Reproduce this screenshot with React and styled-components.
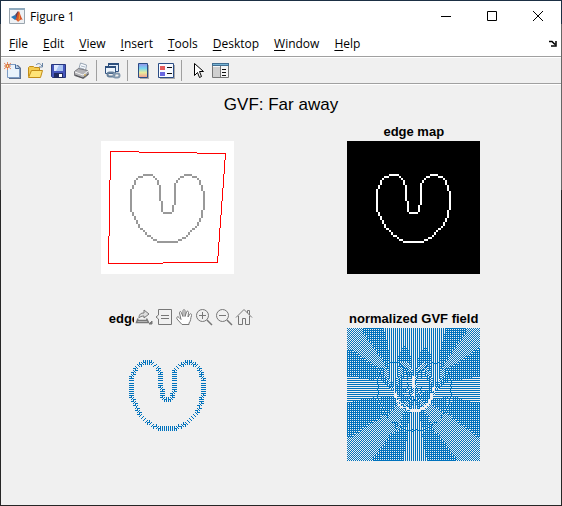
import React from "react";
import styled, { createGlobalStyle } from "styled-components";

const GlobalStyle = createGlobalStyle`
  * { box-sizing: border-box; }
  body { margin: 0; background: #262626; }
`;

const Frame = styled.div`
  min-height: 100vh;
  padding: 1px;
  display: flex;
  background: linear-gradient(to bottom, #1b2f44 24px, #666 24px, #666 190px, #262626 190px);
`;
const Window = styled.main`
  flex: 1;
  min-width: 0;
  display: flex;
  flex-direction: column;
  background: #f0f0f0;
  color: #000;
  font-family: "Open Sans", "Noto Sans", sans-serif;
  font-size: 12px;
`;
const TitleBar = styled.header`
  height: 30px;
  display: flex;
  align-items: center;
  gap: 5px;
  padding-left: 8px;
  background: #fff;
`;
const WindowTitle = styled.h1`
  flex: 1;
  margin: 0;
  font-size: 12px;
  font-weight: 400;
`;
const Captions = styled.div`
  display: flex;
`;
const CaptionButton = styled.button`
  width: 46px;
  height: 28px;
  padding: 0;
  border: 0;
  background: transparent;
  display: grid;
  place-items: center;
`;
const MenuBar = styled.nav`
  height: 25px;
  display: flex;
  align-items: center;
  gap: 15px;
  padding: 0 4px 0 8px;
  background: #fff;
`;
const MenuButton = styled.button`
  padding: 0;
  border: 0;
  background: transparent;
  color: inherit;
  font: inherit;
  line-height: 16px;
  u { text-underline-offset: 2px; }
`;
const DockButton = styled(MenuButton)`
  margin-left: auto;
  display: flex;
`;
const ToolBar = styled.div`
  height: 28px;
  display: flex;
  align-items: center;
  border-top: 1px solid #a0a0a0;
  border-bottom: 1px solid #a0a0a0;
  box-shadow: inset 0 1px #fff, 0 1px #fff;
`;
const ToolButton = styled.button`
  width: 23px;
  height: 22px;
  padding: 0;
  border: 0;
  background: transparent;
  display: grid;
  place-items: center;
`;
const Separator = styled.span`
  width: 1px;
  height: 21px;
  margin: 0 4px 0 3px;
  background: #a0a0a0;
`;
const FigureArea = styled.section`
  flex: 1;
  font-family: "Liberation Sans", Arial, sans-serif;
`;
const FigureTitle = styled.h2`
  margin: 0;
  height: 40px;
  line-height: 42px;
  text-align: center;
  font-size: 17px;
  font-weight: 400;
`;
const Subplots = styled.div`
  display: grid;
  grid-template-columns: 1fr 1fr;
  gap: 37px 0;
  padding: 0 24px 43px 43px;
  justify-items: center;
`;
const Axes = styled.figure`
  position: relative;
  width: 133px;
  margin: 0;
`;
const AxesTitle = styled.figcaption`
  display: flex;
  justify-content: ${(p) => (p.$start ? "flex-start" : "center")};
  padding-left: ${(p) => (p.$start ? "8px" : "0")};
  height: 17px;
  line-height: 16px;
  font-size: 13px;
  font-weight: 700;
  white-space: nowrap;
`;
const Plot = styled.svg`
  display: block;
  width: 133px;
  height: 133px;
  background: ${(p) => p.$fill};
  shape-rendering: crispEdges;
`;
const AxesTools = styled.div`
  position: absolute;
  top: -4px;
  right: -20px;
  display: flex;
  background: #f0f0f0;
`;
const AxesTool = styled.button`
  width: 20px;
  height: 20px;
  padding: 0;
  border: 0;
  background: transparent;
  color: #777;
  display: grid;
  place-items: center;
`;

/* ---- Edge curve on a 64 x 64 grid: [column, row, width, height] ---- */
const RUNS = [
  [20, 16, 5, 1], [18, 17, 2, 1], [17, 18, 1, 1], [16, 19, 1, 2], [15, 21, 1, 2],
  [14, 23, 1, 11], [15, 34, 1, 2], [16, 36, 1, 2], [17, 38, 1, 2], [18, 40, 1, 2],
  [19, 42, 1, 1], [20, 43, 1, 1], [21, 44, 1, 1], [22, 45, 2, 1], [24, 46, 1, 1],
  [25, 47, 2, 1], [27, 48, 10, 1], [37, 47, 2, 1], [39, 46, 2, 1], [41, 45, 1, 1],
  [42, 44, 1, 1], [43, 43, 1, 1], [44, 42, 1, 1], [45, 41, 1, 1], [46, 39, 1, 2],
  [47, 37, 1, 2], [48, 33, 1, 4], [49, 24, 1, 9], [48, 21, 1, 3], [47, 19, 1, 2],
  [46, 18, 1, 1], [44, 17, 2, 1], [40, 16, 4, 1], [38, 17, 2, 1], [37, 18, 1, 1],
  [36, 19, 1, 1], [35, 20, 1, 11], [34, 31, 1, 3], [30, 34, 4, 1], [29, 29, 1, 5],
  [28, 21, 1, 8], [27, 19, 1, 2], [26, 18, 1, 1], [25, 17, 1, 1],
];
const N = 64;
const SIZE = 133;
const curvePath = RUNS.map(([x, y, w, h]) => `M${x} ${y}h${w}v${h}h${-w}z`).join("");

const edge = new Float64Array(N * N);
RUNS.forEach(([x, y, w, h]) => {
  for (let j = y; j < y + h; j++) for (let i = x; i < x + w; i++) edge[j * N + i] = 1;
});

function gradient(f) {
  const gx = new Float64Array(N * N);
  const gy = new Float64Array(N * N);
  for (let j = 1; j < N - 1; j++) {
    for (let i = 1; i < N - 1; i++) {
      const k = j * N + i;
      gx[k] = (f[k + 1] - f[k - 1]) / 2;
      gy[k] = (f[k + N] - f[k - N]) / 2;
    }
  }
  return [gx, gy];
}

/* Diffuses the edge gradient outwards (gradient vector flow). */
function diffuse(gx, gy, steps) {
  let u = gx.slice();
  let v = gy.slice();
  const step = (a, g) => {
    const out = new Float64Array(N * N);
    for (let j = 0; j < N; j++) {
      for (let i = 0; i < N; i++) {
        const k = j * N + i;
        const l = i > 0 ? a[k - 1] : a[k + 1];
        const r = i < N - 1 ? a[k + 1] : a[k - 1];
        const t = j > 0 ? a[k - N] : a[k + N];
        const b = j < N - 1 ? a[k + N] : a[k - N];
        const m = gx[k] * gx[k] + gy[k] * gy[k];
        out[k] = a[k] + 0.2 * (l + r + t + b - 4 * a[k]) - m * (a[k] - g[k]);
      }
    }
    return out;
  };
  for (let s = 0; s < steps; s++) {
    u = step(u, gx);
    v = step(v, gy);
  }
  return [u, v];
}

const makeBitmap = () => {
  const px = new Uint8Array(SIZE * SIZE);
  const set = (x, y) => {
    if (x >= 0 && x < SIZE && y >= 0 && y < SIZE) px[y * SIZE + x] = 1;
  };
  const line = (ax, ay, bx, by) => {
    const n = Math.max(Math.abs(bx - ax), Math.abs(by - ay), 1);
    for (let s = 0; s <= n; s++) {
      set(Math.round(ax + ((bx - ax) * s) / n), Math.round(ay + ((by - ay) * s) / n));
    }
  };
  const toPath = () => {
    let d = "";
    for (let y = 0; y < SIZE; y++) {
      for (let x = 0; x < SIZE; x++) {
        if (!px[y * SIZE + x]) continue;
        let w = 1;
        while (x + w < SIZE && px[y * SIZE + x + w]) w++;
        d += `M${x} ${y}h${w}v1h${-w}z`;
        x += w;
      }
    }
    return d;
  };
  return { set, line, toPath };
};

/* Short ticks across the curve. */
function gradientTicks(u, v) {
  const bmp = makeBitmap();
  for (let j = 0; j < N; j++) {
    for (let i = 0; i < N; i++) {
      const k = j * N + i;
      const m = Math.hypot(u[k], v[k]);
      if (m < 1e-12) continue;
      const x = Math.round((i + 0.5) * (SIZE / N) - 0.5);
      const y = Math.round((j + 0.5) * (SIZE / N) - 0.5);
      bmp.line(x, y, Math.round(x + (u[k] / m) * 2), Math.round(y + (v[k] / m) * 2));
    }
  }
  return bmp.toPath();
}

/* Unit arrows two pixels apart; slanted arrows also show their heads. */
function unitField(u, v) {
  const bmp = makeBitmap();
  const count = Math.ceil(SIZE / 2);
  const at = (i, j) => {
    const c = Math.min(N - 1, Math.floor((i * N) / count));
    const r = Math.min(N - 1, Math.floor((j * N) / count));
    const k = r * N + c;
    const m = Math.hypot(u[k], v[k]);
    return m < 1e-14 ? [0, 0] : [u[k] / m, v[k] / m];
  };
  for (let j = 0; j < count; j++) {
    for (let i = 0; i < count; i++) {
      const [dx, dy] = at(i, j);
      if (!dx && !dy) continue;
      const [rx] = at(Math.min(count - 1, i + 1), j);
      const [, by] = at(i, Math.min(count - 1, j + 1));
      if ((dx < -0.5 && rx > 0.5) || (dy < -0.5 && by > 0.5)) continue;
      const x = i * 2;
      const y = j * 2;
      const sx = Math.sign(dx);
      const sy = Math.sign(dy);
      const lo = Math.min(Math.abs(dx), Math.abs(dy));
      bmp.set(x, y);
      if (lo < 0.24) {
        if (Math.abs(dx) > Math.abs(dy)) bmp.set(x + sx, y);
        else bmp.set(x, y + sy);
      } else if (lo < 0.58) {
        bmp.set(x + sx, y);
        bmp.set(x, y + sy);
      } else {
        bmp.set(x + sx, y + sy);
      }
    }
  }
  return bmp.toPath();
}

/* A closed polygon drawn in whole-pixel steps. */
function steppedPolygon(points) {
  const bmp = makeBitmap();
  points.forEach(([x, y], i) => {
    const [nx, ny] = points[(i + 1) % points.length];
    bmp.line(x, y, nx, ny);
  });
  return bmp.toPath();
}

const [GX, GY] = gradient(edge);
const [U, V] = diffuse(GX, GY, 120);
const gradientPath = gradientTicks(GX, GY);
const fieldPath = unitField(U, V);
const contourPath = steppedPolygon([[9, 10], [124, 12], [116, 121], [7, 122]]);

const Curve = ({ color }) => (
  <path d={curvePath} fill={color} transform={`scale(${SIZE / N})`} />
);

/* ---- Icons ---- */
const Ico = ({ children, w = 17, h = 17 }) => (
  <svg width={w} height={h} viewBox={`0 0 ${w} ${h}`} fill="none" aria-hidden="true">
    {children}
  </svg>
);
const MatlabIcon = () => (
  <Ico w={16} h={16}>
    <path d="M.5 .5h15v15H.5z" fill="#eef1f4" stroke="#9aa5ae" />
    <path d="M0 0h16v2H0z" fill="#8faabd" />
    <path d="M2 9l4-2 3 3-3 2z" fill="#2877b8" />
    <path d="M6 7l3-4 1 2-2 5z" fill="#5a3f55" />
    <path d="M6 12c2-1 2-7 4-9 1 2 2 7 4 9-2-1-3 0-5 2-1-2-2-2-3-2z" fill="#d65427" />
    <path d="M10 4c1 3 1 5 1 7l-2 2c1-3 1-5 1-9z" fill="#f09a37" />
  </Ico>
);
const NewIcon = () => (
  <Ico>
    <path d="M5 3h9l3 3v11H5z" fill="#5c7191" />
    <path d="M3.500 2.500h8l4 4v9h-12z" fill="#e9f3fc" stroke="#7c9bc3" />
    <path d="M11.500 2.500v4h4" fill="#bcd2ea" stroke="#45699a" />
    <path d="M0 1l7 6M7 1L0 7M3.500 0v8M0 4h7" stroke="#e58a61" />
    <circle cx="3.500" cy="4" r="1.500" fill="#fff09a" stroke="#d55926" />
  </Ico>
);
const OpenIcon = () => (
  <Ico>
    <path d="M1.500 14.500V5.500l1-1h4l1 1h5v3" fill="#f4cb50" stroke="#c28c17" />
    <path d="M1.500 15.500l3-7h11l-2 7z" fill="#ffe477" stroke="#c28c17" />
    <path d="M9 3c2-2 4-2 6 1M15.500 1v4H12" stroke="#6682a4" />
  </Ico>
);
const SaveIcon = () => (
  <Ico>
    <path d="M1.500 2.500h14v13h-13l-1-1z" fill="#4657bd" stroke="#29387e" />
    <path d="M4 3h9v6H4z" fill="#dfeaff" />
    <path d="M9 3h4v6H6z" fill="#a9c4f3" />
    <path d="M4 11h9v5H4z" fill="#202b61" />
    <path d="M9 12h3v3H9z" fill="#fff" />
  </Ico>
);
const PrintIcon = () => (
  <Ico>
    <path d="M5.500 8l2-7 6 2-1 6z" fill="#f8fbff" stroke="#97a4b3" />
    <path d="M8 4l4 1M7 6l4 1" stroke="#a8b6c5" />
    <path d="M1.500 9.500l4-3 9 2 1 4-5 4-9-3z" fill="#b4b4b8" stroke="#77777c" />
    <path d="M2 10l8 3 5-4" stroke="#f4f4f4" />
    <path d="M2 13l8 3 5-4" stroke="#505155" />
    <path d="M11 13h2" stroke="#e0ae34" />
  </Ico>
);
const LinkIcon = () => (
  <Ico>
    <path d="M4.500 1.500h10v8h-10z" fill="#e3eefb" stroke="#2e507e" />
    <path d="M4 1h11v2H4z" fill="#2e507e" />
    <path d="M1.500 4.500h10v7h-10z" fill="#eef5fc" stroke="#2e507e" />
    <path d="M1 4h11v2H1z" fill="#2e507e" />
    <rect x="3.500" y="10.500" width="7" height="4" rx="2" stroke="#66809b" strokeWidth="2" />
    <rect x="9.500" y="11.500" width="6" height="4" rx="2" stroke="#8298ae" strokeWidth="2" />
  </Ico>
);
const ColorbarIcon = () => (
  <Ico>
    <defs>
      <linearGradient id="bar" x1="0" y1="0" x2="0" y2="1">
        <stop offset="0" stopColor="#9590ea" />
        <stop offset=".35" stopColor="#78d7f0" />
        <stop offset=".65" stopColor="#e9ec9a" />
        <stop offset="1" stopColor="#f19992" />
      </linearGradient>
    </defs>
    <path d="M5 3h9v14H5z" fill="#aaa" />
    <path d="M3.500 1.500h9v14h-9z" fill="url(#bar)" stroke="#2b4d85" />
  </Ico>
);
const LegendIcon = () => (
  <Ico>
    <path d="M2 3h15v14H2z" fill="#aaa" />
    <path d="M.500 1.500h15v14H.500z" fill="#f7faff" stroke="#2b4d85" />
    <path d="M2 4h5v4H2z" fill="#e45b5b" />
    <path d="M2 10h5v4H2z" fill="#6866e0" />
    <path d="M9 5.500h5M9 11.500h5" stroke="#111" />
  </Ico>
);
const PointerIcon = () => (
  <Ico>
    <path d="M5.500 1.500v12l3-3 2 5 2-1-2-5h4z" fill="#fff" stroke="#000" />
  </Ico>
);
const InspectorIcon = () => (
  <Ico>
    <path d="M.500 1.500h16v14H.500z" fill="#f5f5f5" stroke="#777" />
    <path d="M0 1h17v3H0z" fill="#426e91" />
    <path d="M1 2h15v1H1z" fill="#77b4d5" />
    <path d="M1 5h7v10H1z" fill="#cfcfcf" />
    <path d="M8.500 4v12" stroke="#777" />
    <path d="M10 7.500h4M10 10.500h4M10 13.500h4" stroke="#111" />
  </Ico>
);

const Out = ({ children }) => (
  <svg width="18" height="18" viewBox="0 0 18 18" fill="none" stroke="currentColor" aria-hidden="true">
    {children}
  </svg>
);
const axesTools = [
  ["Export", <Out><path d="M3 10.500L1.500 14.500h12l-2-4M2 12.500h10" strokeWidth="1.500" /><path d="M4 10c0-4 2-5 5-5V2l5 4-5 4V8C6 8 5 9 4 10z" fill="#ddd" /><path d="M14 16h3v-3z" fill="currentColor" /></Out>],
  ["Data tips", <Out><path d="M3.500 1.500h13v15h-13V11L1 9l2.500-2zM6 7.500h8M6 10.500h8" /></Out>],
  ["Pan", <Out><path d="M7 16.500L2 11c-1-2 1-3 2-1.500L6 11.500 4.500 5c0-2 1.500-2 2 0L8 8.500V3c0-2 2-2 2 0v5.500L11.500 4c.5-1.500 2-1 2 .5L13 9l1.500-2.500c1-1.500 2.500-.5 2 1C15.500 10 16 13 14 15v1.500z" fill="#fff" /></Out>],
  ["Zoom in", <Out><circle cx="7.500" cy="7.500" r="6" /><path d="M12 12l5 5" strokeWidth="1.500" /><path d="M4 7.500h7M7.500 4v7" /></Out>],
  ["Zoom out", <Out><circle cx="7.500" cy="7.500" r="6" /><path d="M12 12l5 5" strokeWidth="1.500" /><path d="M4 7.500h7" /></Out>],
  ["Restore view", <Out><path d="M1 9.500L9 1.500l8 8M3.500 8v8.500h4v-6h3v6h4V8M12.500 5V2.500h2V7" /></Out>],
];

const toolGroups = [
  [["New figure", NewIcon], ["Open file", OpenIcon], ["Save figure", SaveIcon], ["Print figure", PrintIcon]],
  [["Link plot", LinkIcon]],
  [["Insert colorbar", ColorbarIcon], ["Insert legend", LegendIcon]],
  [["Edit plot", PointerIcon], ["Property inspector", InspectorIcon]],
];
const menus = ["File", "Edit", "View", "Insert", "Tools", "Desktop", "Window", "Help"];
const captions = [
  ["Minimize", "M1 6.500h10"],
  ["Maximize", "M1.500 1.500h9v9h-9z"],
  ["Close", "M1 1l10 10M11 1L1 11"],
];

export default function App() {
  return (
    <Frame>
      <GlobalStyle />
      <Window>
        <TitleBar>
          <MatlabIcon />
          <WindowTitle>Figure 1</WindowTitle>
          <Captions>
            {captions.map(([label, d]) => (
              <CaptionButton key={label} aria-label={label}>
                <Ico w={12} h={12}><path d={d} stroke="#000" /></Ico>
              </CaptionButton>
            ))}
          </Captions>
        </TitleBar>
        <MenuBar>
          {menus.map((m) => (
            <MenuButton key={m}><u>{m[0]}</u>{m.slice(1)}</MenuButton>
          ))}
          <DockButton aria-label="Dock figure">
            <Ico w={8} h={7}>
              <path d="M0 1.500h3l3 3M7 1v5H2" stroke="#000" strokeWidth="1.500" />
            </Ico>
          </DockButton>
        </MenuBar>
        <ToolBar role="toolbar" aria-label="Figure tools">
          {toolGroups.map((group, g) => (
            <React.Fragment key={g}>
              {g > 0 && <Separator />}
              {group.map(([label, Icon]) => (
                <ToolButton key={label} aria-label={label}><Icon /></ToolButton>
              ))}
            </React.Fragment>
          ))}
        </ToolBar>
        <FigureArea>
          <FigureTitle>GVF: Far away</FigureTitle>
          <Subplots>
            <Axes>
              <AxesTitle />
              <Plot $fill="#fff" viewBox="0 0 133 133" role="img" aria-label="Initial contour">
                <Curve color="#999" />
                <path d={contourPath} fill="#f00" />
              </Plot>
            </Axes>
            <Axes>
              <AxesTitle>edge map</AxesTitle>
              <Plot $fill="#000" viewBox="0 0 133 133" role="img" aria-label="Edge map">
                <Curve color="#fff" />
              </Plot>
            </Axes>
            <Axes>
              <AxesTitle $start>edge</AxesTitle>
              <Plot $fill="#f0f0f0" viewBox="0 0 133 133" role="img" aria-label="Edge gradient">
                <path d={gradientPath} fill="#0072bd" />
              </Plot>
              <AxesTools>
                {axesTools.map(([label, icon]) => (
                  <AxesTool key={label} aria-label={label}>{icon}</AxesTool>
                ))}
              </AxesTools>
            </Axes>
            <Axes>
              <AxesTitle>normalized GVF field</AxesTitle>
              <Plot $fill="#f0f0f0" viewBox="0 0 133 133" role="img" aria-label="Normalized field">
                <path d={fieldPath} fill="#0072bd" />
              </Plot>
            </Axes>
          </Subplots>
        </FigureArea>
      </Window>
    </Frame>
  );
}
